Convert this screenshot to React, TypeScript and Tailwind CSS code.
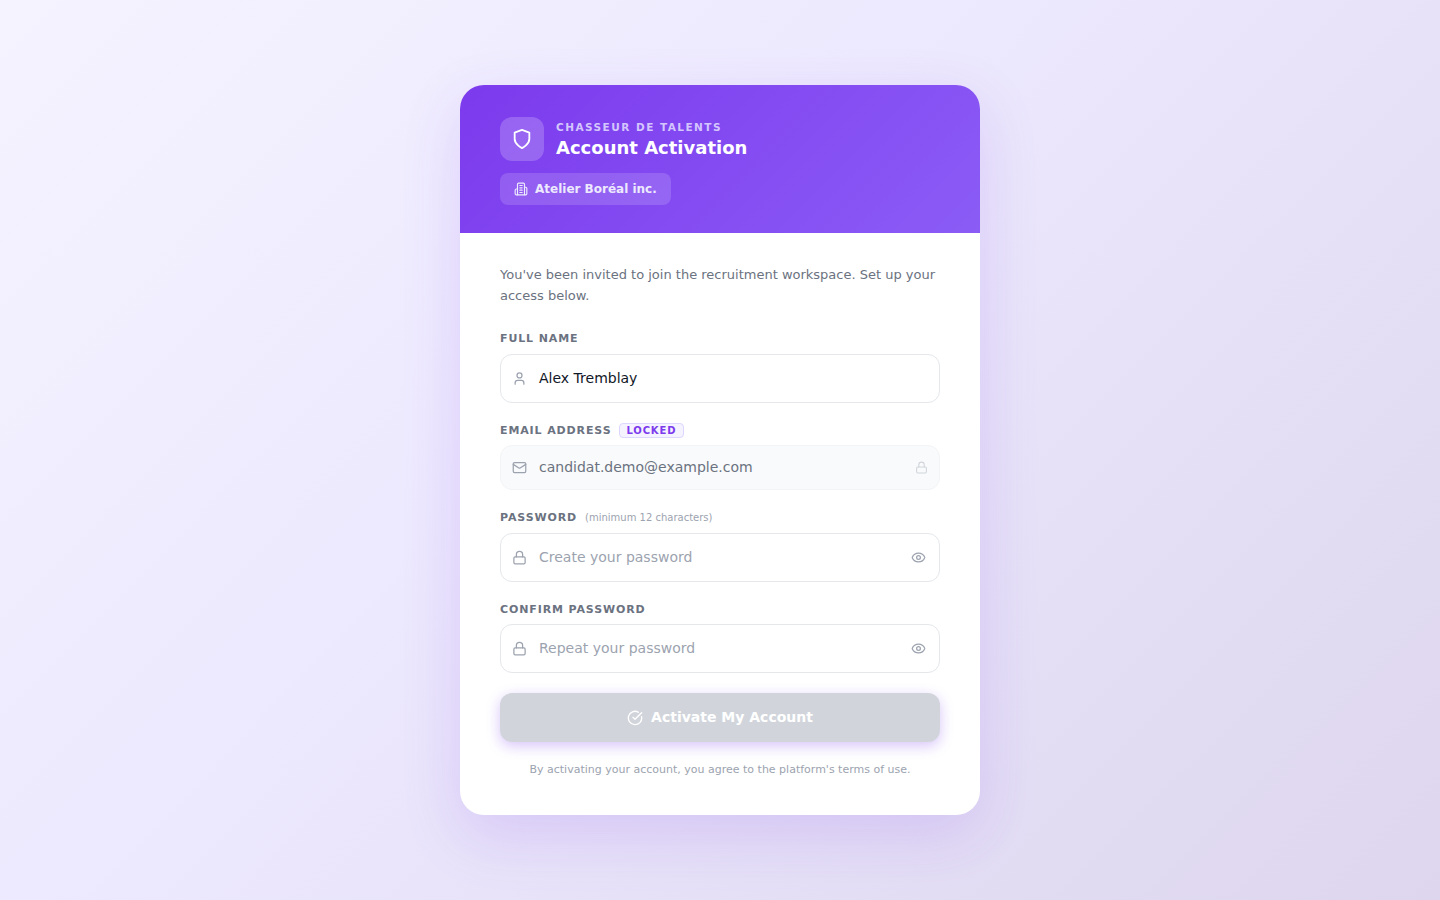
import { User, Mail, Lock, Eye, CircleCheckBig } from "lucide-react";

const font = "font-['DejaVu_Sans',sans-serif]";

function Label({ children, tight }: { children: React.ReactNode; tight?: boolean }) {
  return <div className={`h-[17px] flex items-center gap-2 text-[11px] font-bold tracking-[0.88px] text-[#6b7280] uppercase ${tight ? "mb-[5px]" : "mb-[6px]"}`}>{children}</div>;
}

function PasswordField({ placeholder }: { placeholder: string }) {
  return (
    <div className="h-[49px] flex items-center rounded-xl border border-[#e5e7eb] bg-white pl-[11px] pr-[13px]">
      <Lock size={15} strokeWidth={2} className="text-[#9ca3af] shrink-0" />
      <span className="ml-3 flex-1 text-[14px] text-[#9ca3af]">{placeholder}</span>
      <Eye size={15} strokeWidth={2} className="text-[#9ca3af] shrink-0" />
    </div>
  );
}

function BuildingIcon() {
  return (
    <svg width="14" height="14" viewBox="0 0 24 24" fill="none" stroke="#ede9fe" strokeWidth="2" strokeLinecap="round" strokeLinejoin="round" className="shrink-0">
      <path d="M6 22V4a2 2 0 0 1 2-2h8a2 2 0 0 1 2 2v18Z" />
      <path d="M6 12H4a2 2 0 0 0-2 2v6a2 2 0 0 0 2 2h2" />
      <path d="M18 9h2a2 2 0 0 1 2 2v9a2 2 0 0 1-2 2h-2" />
      <path d="M10 6h4" />
      <path d="M10 10h4" />
      <path d="M10 14h4" />
      <path d="M10 18h4" />
    </svg>
  );
}

function ShieldIcon() {
  return (
    <svg width="22" height="22" viewBox="0 0 24 24" fill="none" stroke="white" strokeWidth="2" strokeLinecap="round" strokeLinejoin="round">
      <path d="M12 22s8-4 8-10V5l-8-3-8 3v7c0 6 8 10 8 10z" />
    </svg>
  );
}

export default function App() {
  return (
    <div className={`${font} h-[900px] flex items-start justify-center pt-[85px] bg-[linear-gradient(135deg,#f5f3ff_0%,#ede9fe_40%,#ddd6ee_100%)]`}>
      <div className="w-[520px] rounded-[24px] overflow-hidden bg-white shadow-[0_20px_60px_rgba(124,58,237,0.16)]">
        <div className="h-[148px] px-10 pt-8 bg-[linear-gradient(135deg,#7c3aed,#8b5cf6)]">
          <div className="flex items-center gap-3">
            <div className="w-11 h-11 rounded-xl bg-white/20 flex items-center justify-center">
              <ShieldIcon />
            </div>
            <div className="pt-[3px]">
              <div className="text-[10.5px] leading-[14px] font-bold tracking-[1.47px] text-[#d4c6fd] uppercase">Chasseur de talents</div>
              <div className="mt-[1px] text-[18px] leading-[26px] font-bold text-white">Account Activation</div>
            </div>
          </div>
          <div className="mt-3 inline-flex h-8 items-center gap-[7px] rounded-lg bg-white/15 pl-[14px] pr-[14px]">
            <BuildingIcon />
            <span className="text-[12px] font-bold text-[#ede9fe]">Atelier Boréal inc.</span>
          </div>
        </div>
        <div className="px-10 pt-[31px] pb-[37px]">
          <p className="text-[13px] leading-[21px] text-[#6b7280] mb-[25px]">You've been invited to join the recruitment workspace. Set up your access below.</p>
          <Label>Full name</Label>
          <div className="h-[49px] flex items-center rounded-xl border border-[#e5e7eb] bg-white pl-[11px] pr-3">
            <User size={15} strokeWidth={2} className="mb-[1px] text-[#9ca3af]" />
            <span className="ml-3 text-[14px] text-[#111827]">Alex Tremblay</span>
          </div>
          <div className="mt-5">
            <Label tight>Email address<span className="mb-[2px] inline-flex h-[15px] items-center rounded border border-[#ddd6fe] bg-[#f5f3ff] pl-[6px] pr-[7px] text-[10px] tracking-[0.85px] text-[#7c3aed]">Locked</span></Label>
          </div>
          <div className="h-[45px] flex items-center rounded-xl border border-[#f3f4f6] bg-[#f9fafb] pl-[11px] pr-[11px]">
            <Mail size={15} strokeWidth={2} className="text-[#9ca3af]" />
            <span className="ml-3 flex-1 text-[14px] text-[#6b7280]">candidat.demo@example.com</span>
            <Lock size={13} strokeWidth={2} className="text-[#d1d5db]" />
          </div>
          <div className="mt-5">
            <Label>Password<span className="mb-[2px] text-[10px] font-normal normal-case tracking-normal text-[#9ca3af]">(minimum 12 characters)</span></Label>
          </div>
          <PasswordField placeholder="Create your password" />
          <div className="mt-5"><Label tight>Confirm password</Label></div>
          <PasswordField placeholder="Repeat your password" />
          <div className="mt-5 h-[49px] flex items-center justify-center gap-2 rounded-xl bg-[#d1d5db] shadow-[0_4px_14px_rgba(124,58,237,0.3)]">
            <CircleCheckBig size={16} strokeWidth={2} className="text-white" />
            <span className="text-[14px] font-bold text-white">Activate My Account</span>
          </div>
          <p className="mt-5 text-center text-[11px] leading-[16px] text-[#9ca3af]">By activating your account, you agree to the platform's terms of use.</p>
        </div>
      </div>
    </div>
  );
}
